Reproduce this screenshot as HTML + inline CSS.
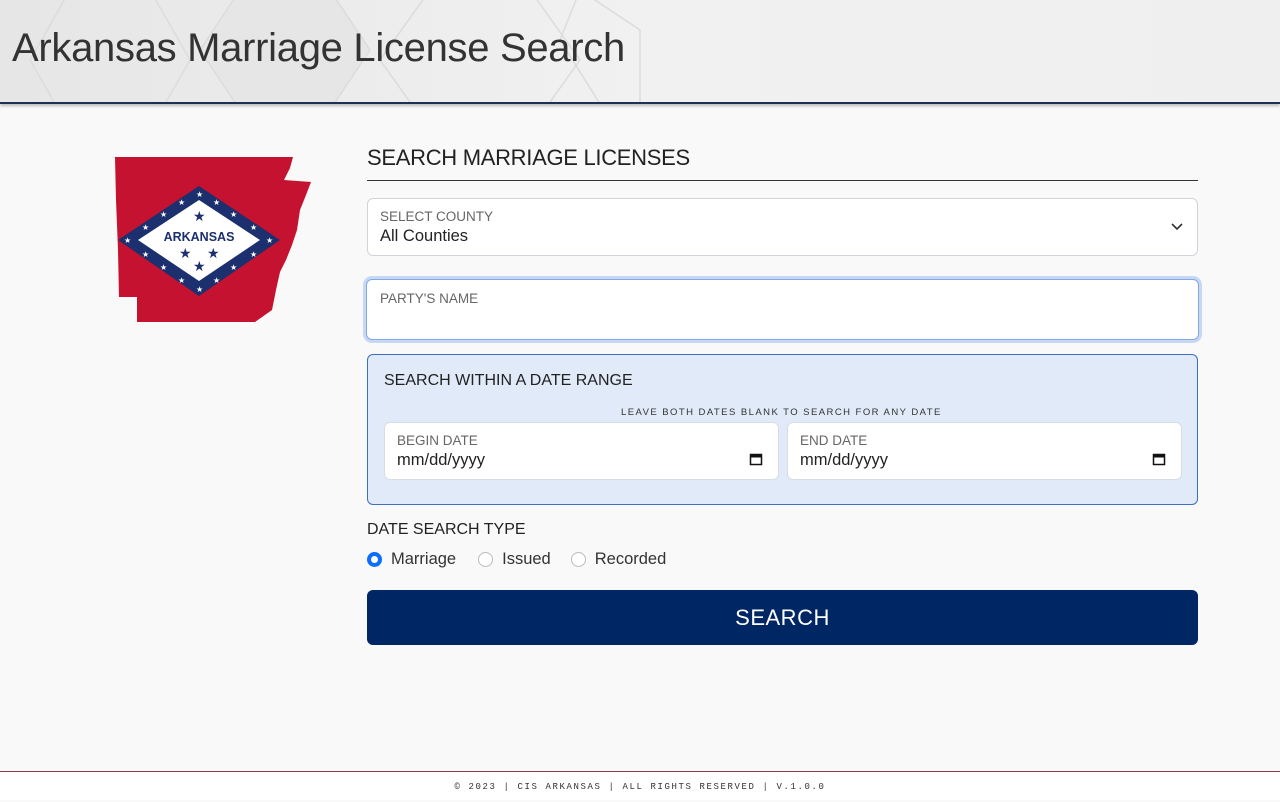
<!DOCTYPE html>
<html><head><meta charset="utf-8"><style>
*{box-sizing:border-box;margin:0;padding:0}
body{width:1280px;height:800px;background:#f9f9f9;font-family:"Liberation Sans",sans-serif;position:relative;overflow:hidden;color:#222}
.hdr{position:absolute;left:0;top:0;width:1280px;height:104px;background:linear-gradient(90deg,#e6e6e6,#f1f1f1 50%,#efefef);border-bottom:2px solid #1e2f55;box-shadow:0 2px 3px rgba(0,0,0,.25);overflow:hidden}
.hdr h1{position:absolute;left:12px;top:26px;font-weight:400;font-size:40px;color:#333;letter-spacing:-0.3px}
.a{position:absolute}
.ttl{left:367px;top:145px;font-size:22px;color:#222;letter-spacing:-0.3px}
.rule{left:367px;top:180px;width:831px;height:1px;background:#333}
.box{background:#fff;border:1px solid #d0d4d9;border-radius:6px}
.lbl{font-size:13.5px;color:#666}
.val{font-size:16.5px;color:#222}
.btn{left:367px;top:590px;width:831px;height:55px;background:#002664;border-radius:6px;color:#fff;font-size:22px;text-align:center;line-height:55px;letter-spacing:.5px}
.ft{left:0;top:771px;width:1280px;height:29px;background:#fff;border-top:1px solid #8a3a48;text-align:center;font-family:"Liberation Mono",monospace;font-size:9px;letter-spacing:1.6px;line-height:30px;color:#333}
.rad{width:15px;height:15px;border-radius:50%;border:1px solid #bbb;background:#fff;display:inline-block}
</style></head><body>
<div class="hdr">
<svg class="a" style="left:0;top:0" width="700" height="104"><g fill="none" stroke="#dcdcdc" stroke-width="1.5">
<polygon points="70,-10 150,-10 190,60 150,130 70,130 30,60"/><polygon points="240,-10 330,-10 370,50 330,110 240,110 200,50" fill="#e6e6e6"/><polygon points="430,-10 530,-10 580,60 530,130 430,130 380,60"/><polygon points="580,-10 640,30 640,104 600,104 560,40"/></g></svg>
<h1>Arkansas Marriage License Search</h1></div>
<svg class="a" style="top:150px;left:110px" width="210" height="180">
<polygon fill="#c41230" points="5,7 183,7 180,18 174,30 201,32 196,45 190,60 187,80 182,95 176,110 170,122 166,140 162,160 145,172 27,172 27,147 9,147 8,100 6,50"/>
<polygon fill="#1c2f6e" points="89,36 170,90 89,146 8,90"/>
<polygon fill="#fff" points="89,50 150,90 89,131 28,90"/>
<g fill="#fff" font-size="8"><text x="86" y="47">★</text><text x="86" y="142">★</text><text x="14" y="93">★</text><text x="156" y="93">★</text><text x="50" y="67">★</text><text x="120" y="67">★</text><text x="50" y="120">★</text><text x="120" y="120">★</text><text x="32" y="80">★</text><text x="140" y="80">★</text><text x="32" y="107">★</text><text x="140" y="107">★</text><text x="68" y="55">★</text><text x="103" y="55">★</text><text x="68" y="133">★</text><text x="103" y="133">★</text></g>
<text x="89" y="91" text-anchor="middle" font-size="12.5" font-weight="bold" fill="#1c2f6e" font-family="Liberation Sans">ARKANSAS</text>
<g fill="#1c2f6e" font-size="14"><text x="83" y="71">★</text><text x="69" y="108">★</text><text x="97" y="108">★</text><text x="83" y="121">★</text></g>
</svg>
<div class="a ttl">SEARCH MARRIAGE LICENSES</div>
<div class="a rule"></div>
<div class="a box" style="left:367px;top:198px;width:831px;height:58px"><div class="a lbl" style="left:12px;top:10px">SELECT COUNTY</div><div class="a val" style="left:12px;top:28px">All Counties</div>
<svg class="a" style="left:803px;top:23px" width="12" height="10"><path d="M1 2l5 5 5-5" fill="none" stroke="#333" stroke-width="1.6"/></svg></div>
<div class="a box" style="left:366px;top:279px;width:833px;height:61px;border:1px solid #86a8e0;box-shadow:0 0 0 3px #c6d8f5"><div class="a lbl" style="left:13px;top:11px">PARTY'S NAME</div></div>
<div class="a" style="left:367px;top:354px;width:831px;height:151px;background:#e0eaf8;border:1px solid #3d6ec4;border-radius:6px">
<div class="a" style="left:16px;top:17px;font-size:16px;color:#222">SEARCH WITHIN A DATE RANGE</div>
<div class="a" style="left:253px;top:52px;font-size:9.5px;letter-spacing:1.45px;color:#333;white-space:nowrap">LEAVE BOTH DATES BLANK TO SEARCH FOR ANY DATE</div>
<div class="a box" style="left:16px;top:67px;width:395px;height:58px;border-color:#d8dde4"><div class="a lbl" style="left:12px;top:10px">BEGIN DATE</div><div class="a val" style="left:12px;top:28px">mm/dd/yyyy</div><svg class="a" style="left:364px;top:29px" width="14" height="14"><rect x="1.5" y="2.5" width="11" height="10" fill="none" stroke="#111" stroke-width="1.5"/><rect x="1.5" y="2.5" width="11" height="3" fill="#111"/></svg></div>
<div class="a box" style="left:419px;top:67px;width:395px;height:58px;border-color:#d8dde4"><div class="a lbl" style="left:12px;top:10px">END DATE</div><div class="a val" style="left:12px;top:28px">mm/dd/yyyy</div><svg class="a" style="left:364px;top:29px" width="14" height="14"><rect x="1.5" y="2.5" width="11" height="10" fill="none" stroke="#111" stroke-width="1.5"/><rect x="1.5" y="2.5" width="11" height="3" fill="#111"/></svg></div>
</div>
<div class="a" style="left:367px;top:521px;font-size:16px">DATE SEARCH TYPE</div>
<div class="a" style="left:367px;top:550px;font-size:16.5px;color:#333;display:flex;align-items:center">
<span class="rad" style="border:4px solid #0d6efd"></span><span style="margin:0 22px 0 9px">Marriage</span>
<span class="rad"></span><span style="margin:0 20px 0 9px">Issued</span>
<span class="rad"></span><span style="margin-left:9px">Recorded</span></div>
<div class="a btn">SEARCH</div>
<div class="a ft">© 2023 | CIS ARKANSAS | ALL RIGHTS RESERVED | V.1.0.0</div>
</body></html>
